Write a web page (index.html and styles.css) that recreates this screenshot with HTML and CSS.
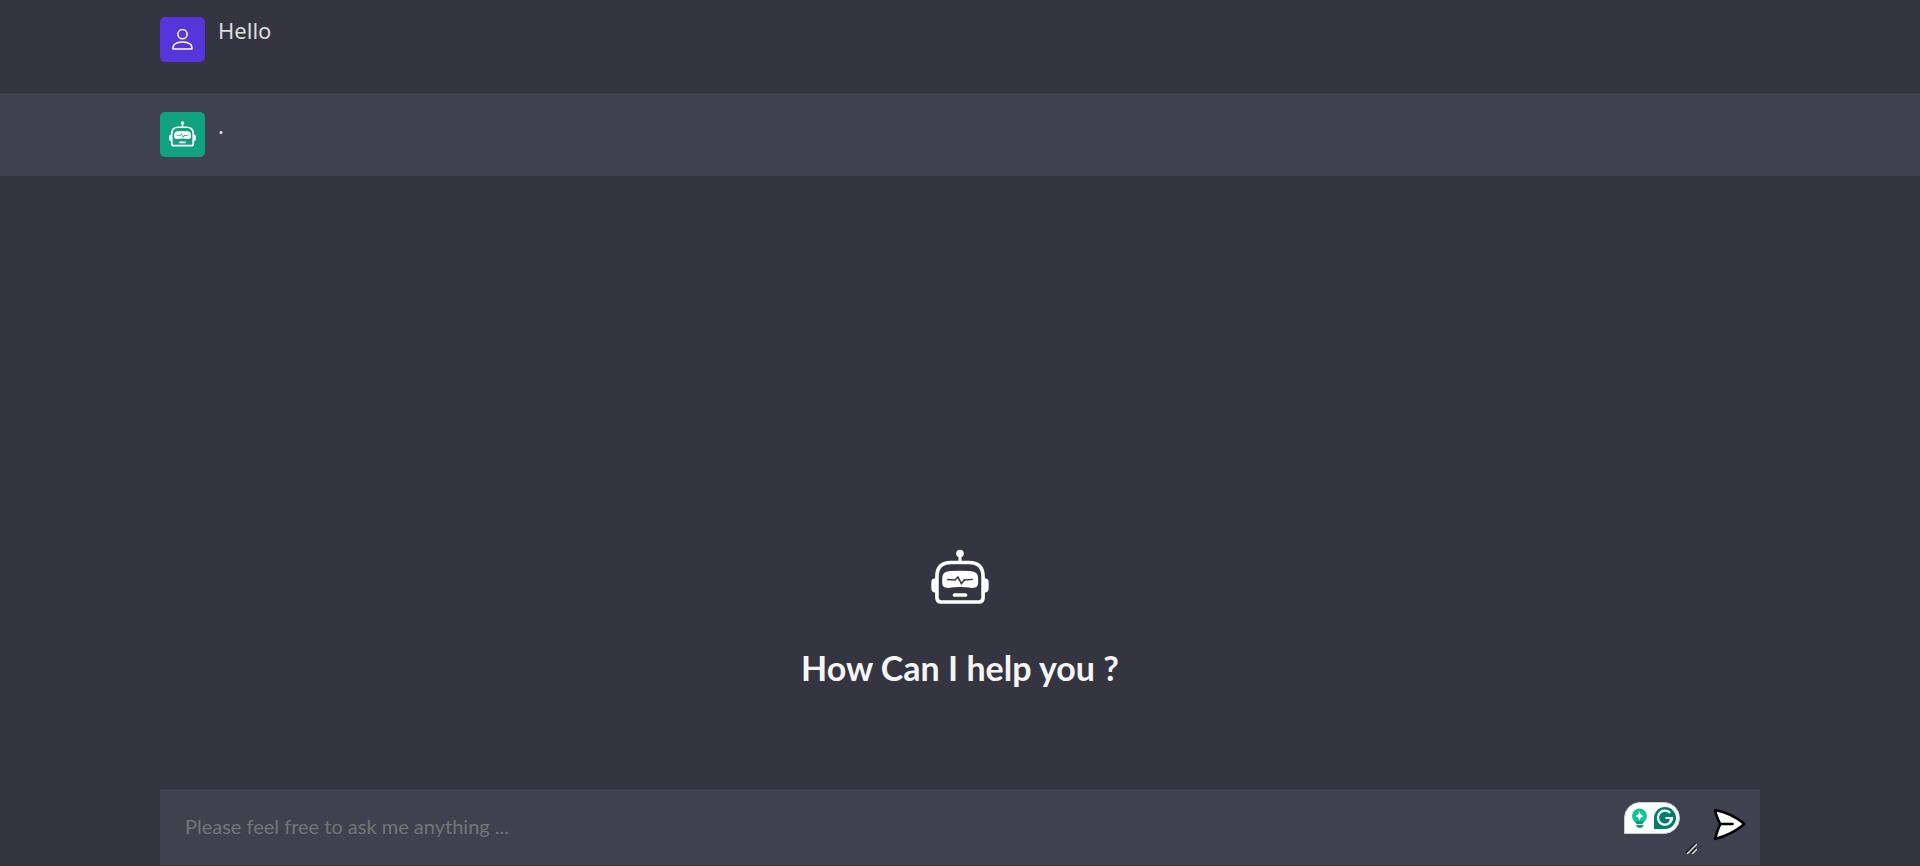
FILE: index.html
```html
<!DOCTYPE html>
<html lang="en">
<head>
<meta charset="utf-8">
<meta name="viewport" content="width=device-width, initial-scale=1">
<title>Chat assistant</title>
<link rel="stylesheet" href="styles.css">
</head>
<body>
<svg class="sprite" aria-hidden="true">
  <symbol id="bot" viewBox="92 56 176 166">
    <circle cx="180" cy="68" r="11.5" fill="#fff"/>
    <path d="M180 70V95" stroke="#fff" stroke-width="9"/>
    <path d="M110 202V138Q110 95 153 95H207Q250 95 250 138V202Q250 215 237 215H123Q110 215 110 202Z" fill="none" stroke="#fff" stroke-width="11"/>
    <path d="M106 143Q93 144 93 154V175Q93 185 106 187ZM254 143Q267 144 267 154V175Q267 185 254 187Z" fill="#fff"/>
    <path fill-rule="evenodd" fill="#fff" d="M149 121Q180 119 211 121Q235 123 235 142V158Q235 172 218 172Q199 169 180 169Q161 169 143 172Q126 172 126 158V142Q126 123 149 121ZM141 144V149L166 150L173 143L184 163L194 150L219 148V144L191 146L185 155L174 135L164 146Z"/>
    <rect x="158" y="188" width="44" height="11" rx="5" fill="#fff"/>
  </symbol>
</svg>
<main class="chat">
  <section class="messages" aria-label="Conversation">
    <article class="message">
      <span class="avatar">
        <svg class="user-icon" viewBox="0 0 21 21" fill="none" stroke="#fff" stroke-width="1.5" aria-hidden="true">
          <circle cx="10.5" cy="5.2" r="4.6"/>
          <path d="M1 20Q0.600 13 10.500 13Q20.400 13 20 20Z" stroke-linejoin="round"/>
        </svg>
      </span>
      <p class="text">Hello</p>
    </article>
    <article class="message message-bot">
      <span class="avatar avatar-bot"><svg class="bot-icon" aria-hidden="true"><use href="#bot"/></svg></span>
      <p class="text">.</p>
    </article>
  </section>
  <section class="greeting">
    <svg class="greeting-icon" aria-hidden="true"><use href="#bot"/></svg>
    <h1>How Can I help you ?</h1>
  </section>
  <form class="composer">
    <textarea class="prompt" rows="1" aria-label="Message" placeholder="Please feel free to ask me anything ..."></textarea>
    <div class="tools">
      <svg class="assist" viewBox="0 0 56 32" role="img" aria-label="Writing assistant">
        <path d="M.5 31.500V16A15.500 15.500 0 0 1 16 .5H40A15.500 15.500 0 0 1 40 31.500Z" fill="#fff" stroke="#c9cad8"/>
        <circle cx="15.500" cy="14" r="7.500" fill="#15c39a"/>
        <path d="M11 19H20L18.500 22H12.500ZM12 23H19.500Q19 26 15.800 26Q12.500 26 12 23Z" fill="#06a07f"/>
        <path d="M15.500 9Q16.200 13.300 20 14Q16.200 14.700 15.500 19Q14.800 14.700 11 14Q14.800 13.300 15.500 9Z" fill="#fff"/>
        <path d="M30 27V16A11 11 0 1 1 41 27Z" fill="#027e6f"/>
        <path d="M46.200 11A7 7 0 1 0 48 16H41.500M48 16L45.500 20" fill="none" stroke="#fff" stroke-width="2.200"/>
      </svg>
      <svg class="grip" viewBox="0 0 11 11" aria-hidden="true">
        <path d="M0 10L10 0M5 10L10 5" stroke="#111" stroke-width="1.500"/>
        <path d="M1 11L11 1M6 11L11 6" stroke="#ddd" stroke-width="1.500"/>
      </svg>
    </div>
    <button class="send" type="submit" aria-label="Send">
      <svg viewBox="0 0 32 32" aria-hidden="true">
        <path d="M2 2Q18 5 30.500 15.500Q18 26 2 30Q4 22 7 15.500Q3 8 2 2ZM7 15.500H19" fill="#fff" stroke="#000" stroke-width="2.500" stroke-linecap="round" stroke-linejoin="round"/>
      </svg>
    </button>
  </form>
</main>
</body>
</html>
```
FILE: styles.css
```css
* { box-sizing: border-box; }

body {
  margin: 0;
  background: #343541;
  color: #f5f5f5;
  font-family: Lato, "Open Sans", sans-serif;
}

.sprite { position: absolute; width: 0; height: 0; }

.chat {
  display: flex;
  flex-direction: column;
  min-height: 100vh;
  padding-bottom: 1px;
}

.messages { flex: 1; }

.message {
  display: flex;
  align-items: flex-start;
  gap: 13px;
  padding: 17px 160px 31px;
}

.message-bot {
  padding: 19px 160px;
  background: #40414f;
}

.avatar {
  display: flex;
  align-items: center;
  justify-content: center;
  width: 45px;
  height: 45px;
  border-radius: 5px;
  background: #5436da;
}

.avatar-bot { background: #11a27f; }
.user-icon { width: 21px; height: 21px; }
.bot-icon { width: 27px; height: 26px; margin-bottom: 2px; }

.text {
  margin: 0;
  color: #dcdcdc;
  font: 22px/26px "Noto Sans", sans-serif;
}

.greeting {
  display: flex;
  flex-direction: column;
  align-items: center;
  gap: 39px;
  padding-bottom: 97px;
}

.greeting-icon { width: 58px; height: 56px; }

h1 {
  margin: 0;
  font-size: 34px;
  line-height: 48px;
}

.composer {
  display: flex;
  align-items: flex-start;
  margin: 0 160px;
  padding: 13px 14px 11px 25px;
  background: #40414f;
}

.prompt {
  flex: 1;
  height: 52px;
  padding: 10px 0;
  border: 0;
  outline: 0;
  resize: none;
  background: transparent;
  color: #fff;
  font: 20px/28px Lato, sans-serif;
}

.prompt::placeholder { color: #757575; }

.tools {
  display: flex;
  align-items: flex-end;
  align-self: stretch;
  gap: 6px;
  margin-right: 16px;
}

.assist { align-self: flex-start; width: 56px; height: 32px; }
.grip { width: 11px; height: 11px; }

.send {
  margin-top: 6px;
  padding: 0;
  border: 0;
  background: transparent;
  cursor: pointer;
}

.send svg { display: block; width: 33px; height: 33px; }
```
